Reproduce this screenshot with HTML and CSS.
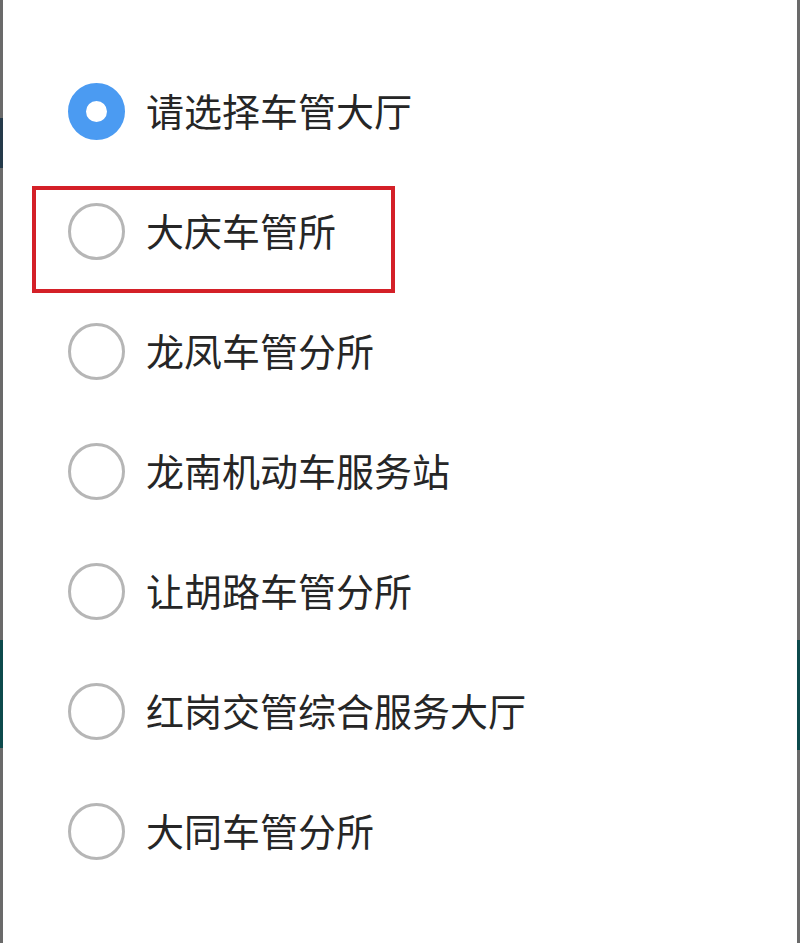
FILE: index.html
```html
<!DOCTYPE html>
<html lang="zh-CN">
<head>
<meta charset="utf-8">
<title>选择车管大厅</title>
<link rel="stylesheet" href="styles.css">
</head>
<body>
<div class="screen">
  <div class="edge edge-left"></div>
  <div class="dialog">
    <ul class="options">
      <li class="option"><span class="radio radio-on"></span><span class="label">请选择车管大厅</span></li>
      <li class="option option-marked"><span class="radio"></span><span class="label">大庆车管所</span></li>
      <li class="option"><span class="radio"></span><span class="label">龙凤车管分所</span></li>
      <li class="option"><span class="radio"></span><span class="label">龙南机动车服务站</span></li>
      <li class="option"><span class="radio"></span><span class="label">让胡路车管分所</span></li>
      <li class="option"><span class="radio"></span><span class="label">红岗交管综合服务大厅</span></li>
      <li class="option"><span class="radio"></span><span class="label">大同车管分所</span></li>
    </ul>
  </div>
  <div class="edge edge-right"></div>
</div>
</body>
</html>
```
FILE: styles.css
```css
html, body {
  margin: 0;
  padding: 0;
  height: 100%;
}
body {
  background: #666666;
  font-family: "Noto Sans CJK SC", "Noto Sans", sans-serif;
}
.screen {
  display: flex;
  height: 943px;
}
.edge {
  width: 3px;
  flex: none;
}
.edge-left {
  background: linear-gradient(to bottom,
    #6a6a6a 0, #6a6a6a 118px,
    #253a4a 118px, #253a4a 168px,
    #6a6a6a 168px, #6a6a6a 640px,
    #0d4a4c 640px, #0d4a4c 748px,
    #6a6a6a 748px);
}
.edge-right {
  background: linear-gradient(to bottom,
    #6a6a6a 0, #6a6a6a 640px,
    #0d4a4c 640px, #0d4a4c 750px,
    #6a6a6a 750px);
}
.dialog {
  flex: 1;
  background: #ffffff;
}
.options {
  list-style: none;
  margin: 0;
  padding: 51px 0 0 0;
}
.option {
  position: relative;
  display: flex;
  align-items: center;
  height: 120px;
  padding-left: 65px;
  gap: 21px;
}
.radio {
  flex: none;
  box-sizing: border-box;
  width: 57px;
  height: 57px;
  border-radius: 50%;
  border: 3px solid #b6b6b6;
  background: #ffffff;
}
.radio-on {
  border: 18.5px solid #4b9bf2;
  background: #ffffff;
}
.label {
  font-size: 38px;
  color: #262626;
  line-height: 1;
  margin-top: -3px;
}
.option-marked::after {
  content: "";
  position: absolute;
  left: 29px;
  top: 15px;
  width: 363px;
  height: 107px;
  box-sizing: border-box;
  border: 4px solid #d42028;
}
```
